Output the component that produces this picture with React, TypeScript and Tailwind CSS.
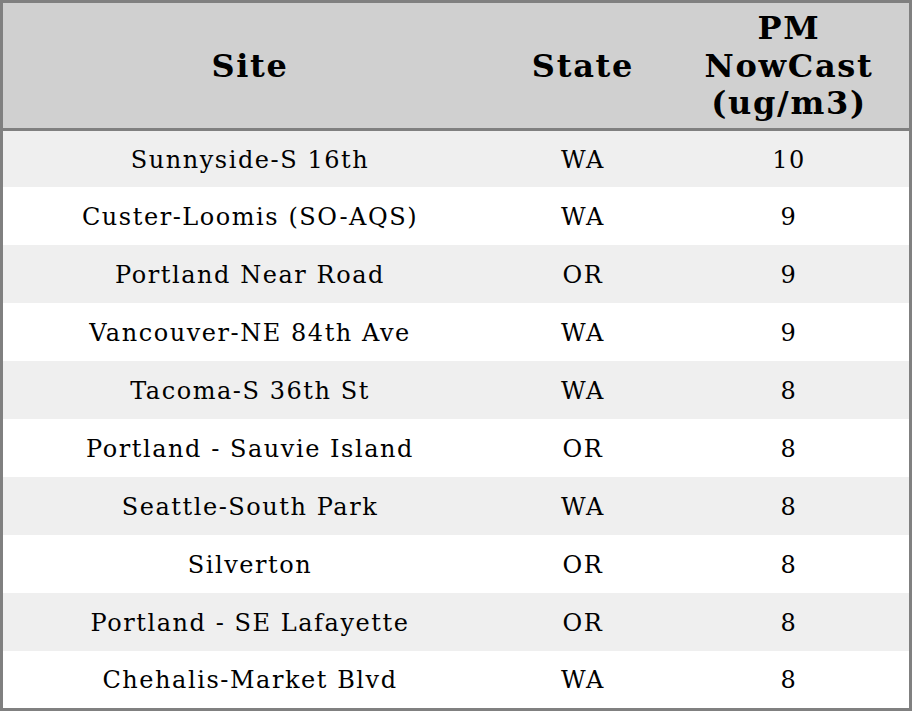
const rows = [
  { site: "Sunnyside-S 16th", state: "WA", pm: "10" },
  { site: "Custer-Loomis (SO-AQS)", state: "WA", pm: "9" },
  { site: "Portland Near Road", state: "OR", pm: "9" },
  { site: "Vancouver-NE 84th Ave", state: "WA", pm: "9" },
  { site: "Tacoma-S 36th St", state: "WA", pm: "8" },
  { site: "Portland - Sauvie Island", state: "OR", pm: "8" },
  { site: "Seattle-South Park", state: "WA", pm: "8" },
  { site: "Silverton", state: "OR", pm: "8" },
  { site: "Portland - SE Lafayette", state: "OR", pm: "8" },
  { site: "Chehalis-Market Blvd", state: "WA", pm: "8" },
];

export default function App() {
  return (
    <div className="w-[912px] h-[711px] bg-white border-[3px] border-[#808080] flex flex-col text-black font-['DejaVu_Serif',serif]">
      <div className="h-[128px] shrink-0 flex items-center pt-[2px] bg-[#d0d0d0] border-b-[3px] border-[#808080] font-bold text-[32px] leading-[37.5px] tracking-[1.7px] text-center">
        <div className="w-[494px]">Site</div>
        <div className="w-[172px]">State</div>
        <div className="flex-1">
          PM
          <br />
          NowCast
          <br />
          (ug/m3)
        </div>
      </div>
      {rows.map((r, i) => (
        <div
          key={r.site}
          className={`flex items-center pt-[1px] text-[24px] tracking-[1.55px] text-center ${
            i === 0 ? "h-[56px]" : i === rows.length - 1 ? "flex-1" : "h-[58px]"
          } ${i % 2 === 0 ? "bg-[#efefef]" : "bg-white"}`}
        >
          <div className="w-[494px]">{r.site}</div>
          <div className="w-[172px]">{r.state}</div>
          <div className="flex-1">{r.pm}</div>
        </div>
      ))}
    </div>
  );
}
